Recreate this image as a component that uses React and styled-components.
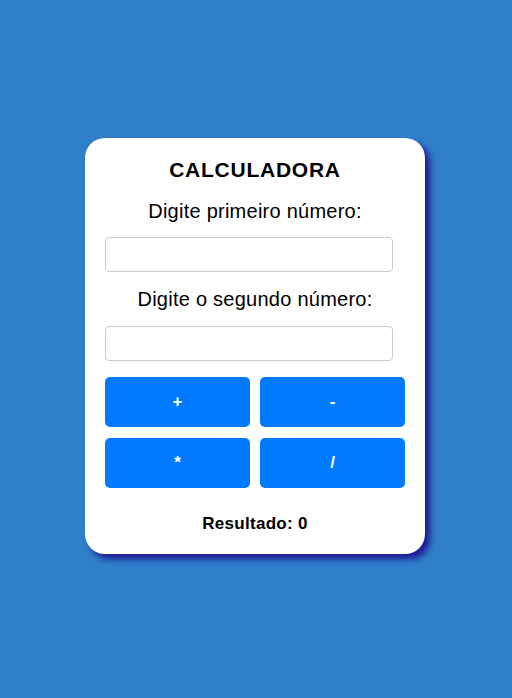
import React, { useState } from "react";
import styled, { createGlobalStyle } from "styled-components";

const GlobalStyle = createGlobalStyle`
  html, body {
    margin: 0;
    padding: 0;
    background: #2f7fc9;
    font-family: "Liberation Sans", Arial, sans-serif;
  }
  * {
    box-sizing: border-box;
  }
`;

const Page = styled.div`
  display: flex;
  justify-content: center;
  align-items: flex-start;
  min-height: 698px;
  padding: 138px 2px 0 0;
`;

const Card = styled.div`
  width: 340px;
  background: #fff;
  border-radius: 20px;
  padding: 20px 20px 20px;
  display: flex;
  flex-direction: column;
  align-items: center;
  box-shadow: 5px 5px 6px #1f1a94;
`;

const Title = styled.h2`
  margin: 0;
  font-size: 21px;
  line-height: 24px;
  letter-spacing: 0.75px;
  font-weight: bold;
  color: #000;
`;

const Label = styled.label`
  margin-top: ${(p) => p.$top}px;
  font-size: 20px;
  line-height: 23px;
  letter-spacing: 0.25px;
  color: #000;
`;

const Input = styled.input`
  margin-top: ${(p) => p.$top}px;
  width: 288px;
  height: 35px;
  align-self: flex-start;
  border: 1px solid #ccc;
  border-radius: 4px;
  padding: 8px;
  font-size: 16px;
  outline: none;
`;

const Buttons = styled.div`
  margin-top: 16px;
  width: 100%;
  display: grid;
  grid-template-columns: 145px 145px;
  column-gap: 10px;
  row-gap: 11px;
`;

const OpButton = styled.button`
  height: 50px;
  border: none;
  border-radius: 5px;
  background: #007bff;
  color: #fff;
  font-family: "Liberation Sans", Arial, sans-serif;
  font-size: 17px;
  font-weight: bold;
  padding: 0;
  cursor: pointer;
`;

const Result = styled.div`
  margin-top: 25px;
  font-size: 17px;
  line-height: 21px;
  letter-spacing: 0.3px;
  font-weight: bold;
  color: #000;
`;

export default function App() {
  const [a, setA] = useState("");
  const [b, setB] = useState("");
  const [result, setResult] = useState(0);

  const calc = (op) => {
    const x = parseFloat(a) || 0;
    const y = parseFloat(b) || 0;
    if (op === "+") setResult(x + y);
    if (op === "-") setResult(x - y);
    if (op === "*") setResult(x * y);
    if (op === "/") setResult(y === 0 ? 0 : x / y);
  };

  return (
    <>
      <GlobalStyle />
      <Page>
        <Card>
          <Title>CALCULADORA</Title>
          <Label $top={18}>Digite primeiro número:</Label>
          <Input $top={14} type="number" value={a} onChange={(e) => setA(e.target.value)} />
          <Label $top={16}>Digite o segundo número:</Label>
          <Input $top={15} type="number" value={b} onChange={(e) => setB(e.target.value)} />
          <Buttons>
            {["+", "-", "*", "/"].map((op) => (
              <OpButton key={op} onClick={() => calc(op)}>
                {op}
              </OpButton>
            ))}
          </Buttons>
          <Result>Resultado: {result}</Result>
        </Card>
      </Page>
    </>
  );
}
